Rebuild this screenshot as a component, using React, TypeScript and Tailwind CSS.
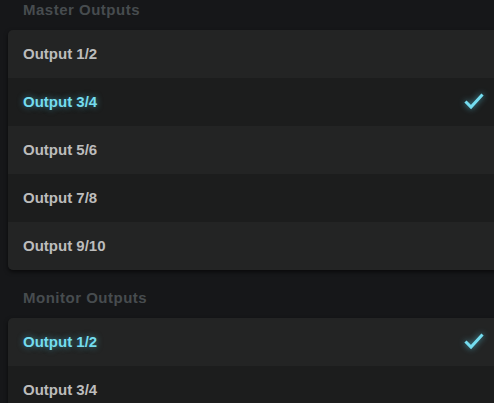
import { useState } from "react"

interface Group {
  title: string
  outputs: string[]
}

const groups: Group[] = [
  { title: "Master Outputs", outputs: ["Output 1/2", "Output 3/4", "Output 5/6", "Output 7/8", "Output 9/10"] },
  { title: "Monitor Outputs", outputs: ["Output 1/2", "Output 3/4", "Output 5/6"] },
]

function Check() {
  return (
    <svg width="20" height="20" viewBox="0 0 20 20" className="drop-shadow-[0_0_3px_rgba(90,210,235,0.7)]">
      <path d="M2.5 10.5 L7 15 L17.5 3.5" fill="none" stroke="#74dcef" strokeWidth="3" strokeLinejoin="miter" strokeLinecap="square" />
    </svg>
  )
}

export default function App() {
  const [selected, setSelected] = useState<Record<string, number>>({
    "Master Outputs": 1,
    "Monitor Outputs": 0,
  })

  return (
    <div
      className="h-[403px] w-[494px] overflow-hidden bg-[#161719] pl-[8px]"
      style={{ fontFamily: '"Liberation Sans", Arial, sans-serif' }}
    >
      {groups.map((g, gi) => (
        <section key={g.title}>
          <div className={`flex items-end pb-[12px] pl-[15px] ${gi === 0 ? "h-[30px]" : "h-[48px]"}`}>
            <h2 className="text-[15px] leading-[17px] font-bold tracking-[0.5px] text-[#474c4f]">{g.title}</h2>
          </div>
          <div className="mr-[-10px] overflow-hidden rounded-[5px] shadow-[0_2px_4px_rgba(0,0,0,0.6)]">
            {g.outputs.map((o, i) => {
              const active = selected[g.title] === i
              return (
                <button
                  key={o}
                  onClick={() => setSelected({ ...selected, [g.title]: i })}
                  className={`flex h-[48px] w-full items-center justify-between pl-[15px] pr-[20px] text-left ${i % 2 === 0 ? "bg-[#232424]" : "bg-[#1c1d1d]"}`}
                >
                  <span
                    className={`text-[15px] font-bold ${active ? "text-[#74dcef] [text-shadow:0_0_6px_rgba(80,200,230,0.55)]" : "text-[#bcbcbc]"}`}
                  >
                    {o}
                  </span>
                  {active && <Check />}
                </button>
              )
            })}
          </div>
        </section>
      ))}
    </div>
  )
}
